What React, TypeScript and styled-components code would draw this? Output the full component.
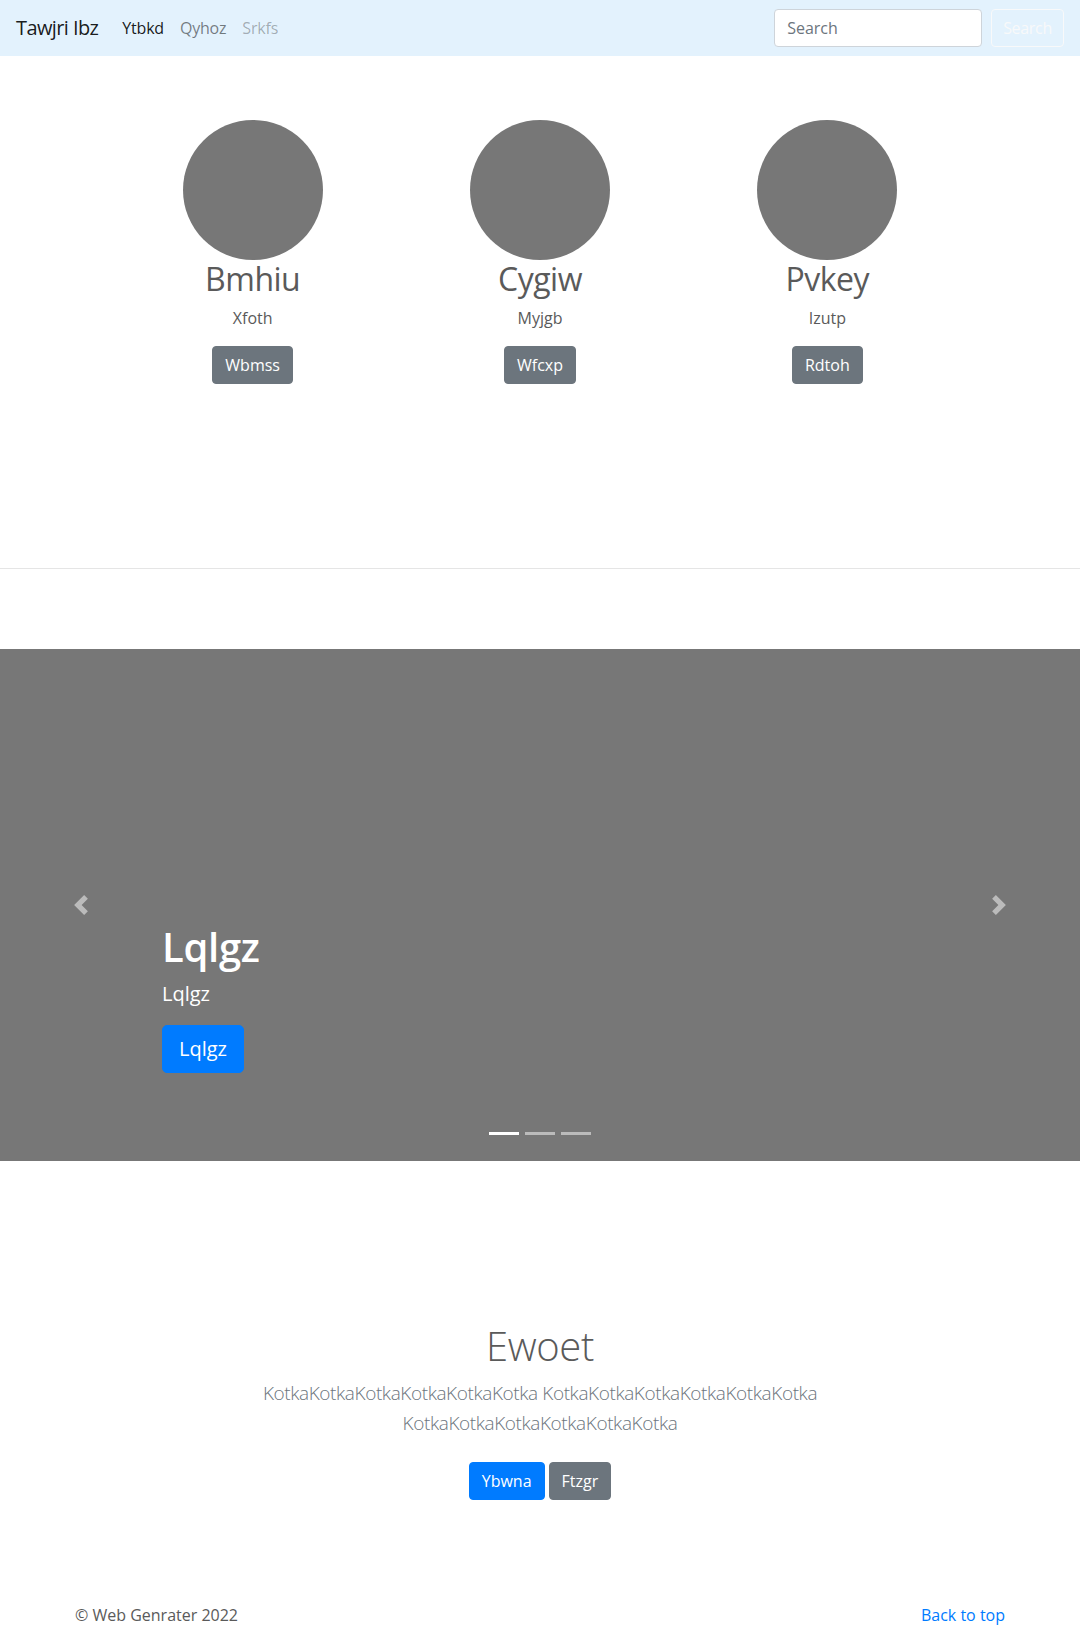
import React from "react";
import styled, { createGlobalStyle, css } from "styled-components";

const Global = createGlobalStyle`
  *, *::before, *::after { box-sizing: border-box; }
  html, body { margin: 0; padding: 0; }
  body {
    font-family: "Open Sans", "Noto Sans", sans-serif;
    font-size: 16px;
    line-height: 1.5;
    color: #5a5a5a;
    background: #fff;
  }
`;

/* ---------- Navbar ---------- */
const Navbar = styled.nav`
  display: flex;
  align-items: center;
  justify-content: space-between;
  height: 56px;
  padding: 8px 16px;
  background: #e3f2fd;
`;

const NavLeft = styled.div`
  display: flex;
  align-items: center;
`;

const Brand = styled.a`
  font-size: 20px;
  line-height: 30px;
  padding: 5px 0;
  margin-right: 16px;
  letter-spacing: -0.6px;
  color: rgba(0, 0, 0, 0.9);
  text-decoration: none;
`;

const NavList = styled.ul`
  display: flex;
  list-style: none;
  margin: 0;
  padding: 0;
`;

type LinkState = "active" | "normal" | "disabled";
const linkColor: Record<LinkState, string> = {
  active: "rgba(0,0,0,0.9)",
  normal: "rgba(0,0,0,0.5)",
  disabled: "rgba(0,0,0,0.3)",
};

const NavLink = styled.a<{ $state: LinkState }>`
  display: block;
  padding: 8px;
  color: ${(p) => linkColor[p.$state]};
  text-decoration: none;
  line-height: 24px;
  letter-spacing: -0.2px;
`;

const SearchForm = styled.form`
  display: flex;
  align-items: center;
  gap: 9px;
  margin: 0;
`;

const SearchInput = styled.input`
  width: 208px;
  height: 38px;
  padding: 6px 12px;
  font-family: inherit;
  font-size: 16px;
  color: #495057;
  background: #fff;
  border: 1px solid #ced4da;
  border-radius: 4px;
  outline: none;
  &::placeholder {
    color: #6c757d;
  }
`;

const OutlineLightButton = styled.button`
  height: 38px;
  padding: 6px 11px;
  font-family: inherit;
  font-size: 16px;
  line-height: 24px;
  letter-spacing: -0.3px;
  color: #f8f9fa;
  background: transparent;
  border: 1px solid #f8f9fa;
  border-radius: 4px;
`;

/* ---------- Buttons ---------- */
type Variant = "primary" | "secondary";
const variantBg: Record<Variant, string> = {
  primary: "#007bff",
  secondary: "#6c757d",
};

const Button = styled.a<{ $variant: Variant; $large?: boolean }>`
  display: inline-block;
  color: #fff;
  background: ${(p) => variantBg[p.$variant]};
  border: 1px solid ${(p) => variantBg[p.$variant]};
  text-decoration: none;
  font-weight: 400;
  ${(p) =>
    p.$large
      ? css`
          padding: 8px 16px;
          font-size: 20px;
          line-height: 30px;
          border-radius: 5px;
        `
      : css`
          padding: 6px 12px;
          font-size: 16px;
          line-height: 24px;
          border-radius: 4px;
        `}
`;

/* ---------- Team ---------- */
const Team = styled.section`
  padding: 64px 0 184px;
`;

const TeamGrid = styled.div`
  display: grid;
  grid-template-columns: repeat(3, 1fr);
  width: 862px;
  margin: 0 auto;
`;

const Member = styled.div`
  display: flex;
  flex-direction: column;
  align-items: center;
  text-align: center;
`;

const Avatar = styled.svg`
  display: block;
  width: 140px;
  height: 140px;
`;

const MemberName = styled.h2`
  margin: 0 0 8px;
  font-size: 32px;
  font-weight: 400;
  line-height: 1.2;
  letter-spacing: -0.5px;
  color: #5a5a5a;
`;

const MemberRole = styled.p`
  margin: 0 0 16px;
`;

const Divider = styled.hr`
  margin: 0 0 80px;
  border: 0;
  border-top: 1px solid rgba(0, 0, 0, 0.1);
  height: 0;
`;

/* ---------- Carousel ---------- */
const Carousel = styled.section`
  position: relative;
  height: 512px;
  background: #777;
  overflow: hidden;
`;

const Slide = styled.div`
  height: 100%;
  display: flex;
  align-items: flex-end;
  padding: 0 15% 52px;
`;

const Caption = styled.div`
  padding: 20px 0;
  color: #fff;
  text-align: left;
`;

const CaptionTitle = styled.h1`
  margin: 0 0 8px;
  font-size: 40px;
  font-weight: 600;
  line-height: 1.2;
  letter-spacing: -0.3px;
`;

const CaptionText = styled.p`
  margin: 0 0 16px;
  font-size: 20px;
  line-height: 30px;
`;

const CaptionAction = styled.p`
  margin: 0 0 16px;
  display: flex;
`;

const Control = styled.button<{ $side: "prev" | "next" }>`
  position: absolute;
  top: 0;
  bottom: 0;
  ${(p) => (p.$side === "prev" ? "left: 0;" : "right: 0;")}
  width: 15%;
  display: flex;
  align-items: center;
  justify-content: center;
  padding: 0;
  background: none;
  border: 0;
  opacity: 0.5;
`;

const ControlIcon = styled.svg`
  width: 20px;
  height: 20px;
  display: block;
`;

const Indicators = styled.ol`
  position: absolute;
  left: 0;
  right: 0;
  bottom: 0;
  margin: 0 0 16px;
  padding: 0;
  list-style: none;
  display: flex;
  justify-content: center;
`;

const Indicator = styled.li<{ $active: boolean }>`
  box-sizing: content-box;
  width: 30px;
  height: 3px;
  margin: 0 3px;
  border-top: 10px solid transparent;
  border-bottom: 10px solid transparent;
  background: #fff;
  background-clip: padding-box;
  opacity: ${(p) => (p.$active ? 1 : 0.5)};
`;

/* ---------- Intro ---------- */
const Intro = styled.section`
  padding: 161px 0 103px;
  text-align: center;
`;

const IntroInner = styled.div`
  max-width: 720px;
  margin: 0 auto;
`;

const IntroTitle = styled.h1`
  margin: 0 0 8px;
  font-size: 40px;
  font-weight: 300;
  line-height: 1.2;
  letter-spacing: -0.4px;
  color: #5a5a5a;
`;

const Lead = styled.p`
  margin: 0;
  padding-bottom: 24px;
  font-size: 19px;
  font-weight: 300;
  line-height: 30px;
  letter-spacing: -0.4px;
  color: #6c757d;
`;

const Actions = styled.div`
  display: flex;
  justify-content: center;
  gap: 4px;
`;

/* ---------- Footer ---------- */
const Footer = styled.footer`
  width: 960px;
  margin: 0 auto;
  padding: 0 15px;
  display: flex;
  justify-content: space-between;
`;

const FooterText = styled.p`
  margin: 0 0 16px;
  color: #5a5a5a;
`;

const BackToTop = styled.a`
  color: #007bff;
  text-decoration: none;
`;

const members = [
  { name: "Bmhiu", role: "Xfoth", action: "Wbmss" },
  { name: "Cygiw", role: "Myjgb", action: "Wfcxp" },
  { name: "Pvkey", role: "Izutp", action: "Rdtoh" },
];

const kotka = "Kotka".repeat(6);

export default function App() {
  return (
    <>
      <Global />
      <Navbar>
        <NavLeft>
          <Brand href="#">Tawjri Ibz</Brand>
          <NavList>
            <li>
              <NavLink href="#" $state="active">Ytbkd</NavLink>
            </li>
            <li>
              <NavLink href="#" $state="normal">Qyhoz</NavLink>
            </li>
            <li>
              <NavLink href="#" $state="disabled">Srkfs</NavLink>
            </li>
          </NavList>
        </NavLeft>
        <SearchForm onSubmit={(e) => e.preventDefault()}>
          <SearchInput type="search" placeholder="Search" aria-label="Search" />
          <OutlineLightButton type="submit">Search</OutlineLightButton>
        </SearchForm>
      </Navbar>

      <Team>
        <TeamGrid>
          {members.map((m) => (
            <Member key={m.name}>
              <Avatar viewBox="0 0 140 140" aria-hidden="true">
                <circle cx="70" cy="70" r="70" fill="#777" />
              </Avatar>
              <MemberName>{m.name}</MemberName>
              <MemberRole>{m.role}</MemberRole>
              <Button href="#" $variant="secondary">{m.action}</Button>
            </Member>
          ))}
        </TeamGrid>
      </Team>

      <Divider />

      <Carousel>
        <Slide>
          <Caption>
            <CaptionTitle>Lqlgz</CaptionTitle>
            <CaptionText>Lqlgz</CaptionText>
            <CaptionAction>
              <Button href="#" $variant="primary" $large>Lqlgz</Button>
            </CaptionAction>
          </Caption>
        </Slide>
        <Control $side="prev" aria-label="Previous">
          <ControlIcon viewBox="0 0 8 8">
            <path fill="#fff" d="M5.25 0l-4 4 4 4 1.5-1.5L4.25 4l2.5-2.5L5.25 0z" />
          </ControlIcon>
        </Control>
        <Control $side="next" aria-label="Next">
          <ControlIcon viewBox="0 0 8 8">
            <path fill="#fff" d="M2.75 0l-1.5 1.5L3.75 4l-2.5 2.5L2.75 8l4-4-4-4z" />
          </ControlIcon>
        </Control>
        <Indicators>
          <Indicator $active={true} />
          <Indicator $active={false} />
          <Indicator $active={false} />
        </Indicators>
      </Carousel>

      <Intro>
        <IntroInner>
          <IntroTitle>Ewoet</IntroTitle>
          <Lead>
            {kotka} {kotka} {kotka}
          </Lead>
          <Actions>
            <Button href="#" $variant="primary">Ybwna</Button>
            <Button href="#" $variant="secondary">Ftzgr</Button>
          </Actions>
        </IntroInner>
      </Intro>

      <Footer>
        <FooterText>© Web Genrater 2022</FooterText>
        <FooterText>
          <BackToTop href="#">Back to top</BackToTop>
        </FooterText>
      </Footer>
    </>
  );
}
